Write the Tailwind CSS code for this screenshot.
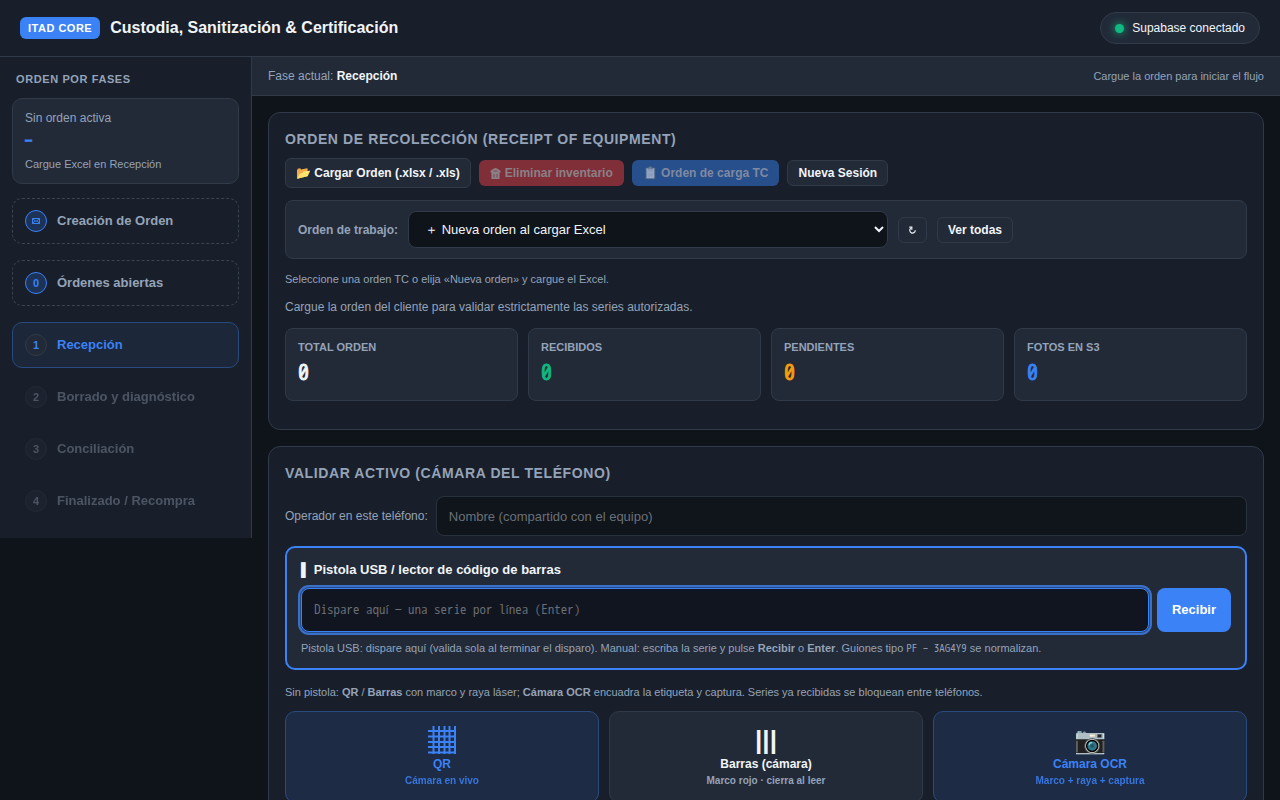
<!DOCTYPE html>
<html lang="es">
<head>
<meta charset="utf-8">
<meta name="viewport" content="width=device-width, initial-scale=1">
<title>ITAD CORE</title>
<script src="https://cdn.jsdelivr.net/npm/@tailwindcss/browser@4"></script>
</head>
<body class="min-h-screen bg-[#0f131a] font-['Liberation_Sans',sans-serif] text-[13px] text-[#f1f5f9]">
<header class="flex items-center justify-between border-b border-[#303a49] bg-[#191f2a] px-5 py-3">
  <div class="flex items-center gap-2.5">
    <span class="rounded-md bg-[#3b82f6] px-2 py-1 text-[11px] leading-[14px] font-bold tracking-[0.5px] text-white">ITAD CORE</span>
    <h1 class="text-base font-bold">Custodia, Sanitización &amp; Certificación</h1>
  </div>
  <div class="flex h-8 items-center gap-2 rounded-full border border-[#303a49] bg-[#222a38] px-3.5 text-xs">
    <span class="size-[9px] rounded-full bg-[#10b981] shadow-[0_0_8px_#10b981]"></span>
    <span>Supabase conectado</span>
  </div>
</header>

<div class="flex items-start">
  <aside class="w-[252px] shrink-0 border-r border-[#303a49] bg-[#191f2a] px-3 py-3.5">
    <h2 class="px-1 text-[11px] leading-4 font-bold tracking-[0.6px] text-[#94a3b8]">ORDEN POR FASES</h2>
    <div class="mt-[11px] mb-3.5 rounded-[10px] border border-[#303a49] bg-[#222a38] px-3 pt-2.5 pb-[11px] text-[#94a3b8]">
      <p class="text-xs leading-[18px]">Sin orden activa</p>
      <p class="mt-1 font-['WenQuanYi_Zen_Hei_Mono','Noto_Sans_Mono_CJK_SC',monospace] text-[14px] leading-5 font-bold text-[#3b82f6] [-webkit-text-stroke:1px]">—</p>
      <p class="mt-[5px] text-[11px] leading-4">Cargue Excel en Recepción</p>
    </div>
    <nav class="flex flex-col gap-1.5 text-[13px] font-bold">
      <button class="mb-2.5 flex h-[46px] items-center gap-2.5 rounded-[10px] border border-dashed border-[#3a4453] px-3 text-[#94a3b8]">
        <span class="flex size-[22px] items-center justify-center rounded-full border border-[#3b82f6] bg-[#1d3257] text-[#3b82f6]">
          <svg class="h-1.5 w-2" viewBox="0 0 8 6" fill="none" stroke="currentColor" aria-hidden="true"><path d="M.5.5h7v5h-7zM.5.5 4 3.500 7.500.5M.5 5.500 3 2.700M7.500 5.500 5 2.700"/></svg>
        </span>Creación de Orden
      </button>
      <button class="mb-2.5 flex h-[46px] items-center gap-2.5 rounded-[10px] border border-dashed border-[#3a4453] px-3 text-[#94a3b8]">
        <span class="flex size-[22px] items-center justify-center rounded-full border border-[#3b82f6] bg-[#1d3257] text-[11px] text-[#3b82f6]">0</span>Órdenes abiertas
      </button>
      <button class="flex h-[46px] items-center gap-2.5 rounded-[10px] border border-[#284a80] bg-[#1c273a] px-3 text-[#3b82f6]">
        <span class="flex size-[22px] items-center justify-center rounded-full border border-[#303a49] bg-[#222a38] text-[11px]">1</span>Recepción
      </button>
      <button class="flex h-[46px] items-center gap-2.5 rounded-[10px] border border-transparent px-3 text-[#94a3b8] opacity-40" disabled>
        <span class="flex size-[22px] items-center justify-center rounded-full border border-[#303a49] bg-[#222a38] text-[11px]">2</span>Borrado y diagnóstico
      </button>
      <button class="flex h-[46px] items-center gap-2.5 rounded-[10px] border border-transparent px-3 text-[#94a3b8] opacity-40" disabled>
        <span class="flex size-[22px] items-center justify-center rounded-full border border-[#303a49] bg-[#222a38] text-[11px]">3</span>Conciliación
      </button>
      <button class="flex h-[46px] items-center gap-2.5 rounded-[10px] border border-transparent px-3 text-[#94a3b8] opacity-40" disabled>
        <span class="flex size-[22px] items-center justify-center rounded-full border border-[#303a49] bg-[#222a38] text-[11px]">4</span>Finalizado / Recompra
      </button>
    </nav>
  </aside>

  <main class="min-w-0 flex-1">
    <div class="flex items-center justify-between border-b border-[#303a49] bg-[#222a38] px-4 py-2.5 text-xs leading-[18px] text-[#94a3b8]">
      <p>Fase actual: <strong class="text-[#f1f5f9]">Recepción</strong></p>
      <p class="text-[11px]">Cargue la orden para iniciar el flujo</p>
    </div>

    <div class="flex flex-col gap-4 p-4">
      <section class="rounded-xl border border-[#303a49] bg-[#191f2a] px-4 pt-4 pb-7">
        <h2 class="text-sm font-bold tracking-[0.6px] text-[#94a3b8]">ORDEN DE RECOLECCIÓN (RECEIPT OF EQUIPMENT)</h2>
        <div class="mt-[9px] flex flex-wrap items-center gap-2 text-xs font-bold">
          <button class="h-[30px] rounded-md border border-[#303a49] bg-[#222a38] px-2.5">📂 Cargar Orden (.xlsx / .xls)</button>
          <button class="flex h-[26px] items-center gap-1 rounded-md bg-[#802f38] px-[11px] text-[#8a8087]" disabled>
            <svg class="h-[11px] w-[11px]" viewBox="0 0 11 11" fill="currentColor" aria-hidden="true"><path d="M5.500 0 8 1l2.500 2v1.500h-10V3L3 1zM1.500 4.500h8V11h-8z"/><path d="M3.500 3h4M4 6v3.500M7 6v3.500" stroke="#802f38" stroke-width=".7"/></svg>Eliminar inventario
          </button>
          <button class="h-[26px] rounded-md bg-[#264f8c] px-[11px] text-[#8089a0]" disabled><span class="opacity-50 grayscale">📋</span> Orden de carga TC</button>
          <button class="h-[26px] rounded-md border border-[#303a49] bg-[#222a38] px-2.5">Nueva Sesión</button>
        </div>
        <div class="mt-3 flex flex-wrap items-center gap-2.5 rounded-lg border border-[#303a49] bg-[#222a38] px-3 py-2.5 text-xs font-bold">
          <label for="orden" class="text-[#94a3b8]">Orden de trabajo:</label>
          <select id="orden" class="h-[37px] w-[480px] rounded-lg border border-[#303a49] bg-[#0f131a] px-3 text-[13px] font-normal text-[#f1f5f9]">
            <option>＋ Nueva orden al cargar Excel</option>
          </select>
          <button class="h-[26px] rounded-md border border-[#303a49] px-2.5" aria-label="Actualizar">
            <svg class="h-2 w-[7px]" viewBox="0 0 7 8" fill="none" stroke="currentColor" stroke-width="1.200" aria-hidden="true"><path d="M1.800 2.300A2.700 2.700 0 1 0 6.200 4.200"/><path d="M.3 1.200h2.500v2.500"/></svg>
          </button>
          <button class="h-[26px] rounded-md border border-[#303a49] px-2.5">Ver todas</button>
        </div>
        <p class="mt-3 text-[11px] leading-4 text-[#94a3b8]">Seleccione una orden TC o elija «Nueva orden» y cargue el Excel.</p>
        <p class="mt-2.5 text-xs leading-5 text-[#94a3b8]">Cargue la orden del cliente para validar estrictamente las series autorizadas.</p>
        <div class="mt-[11px] grid grid-cols-4 gap-2.5 text-[11px] leading-4 font-bold text-[#94a3b8]">
          <div class="rounded-lg border border-[#303a49] bg-[#222a38] px-3 pt-2.5 pb-2.5">
            <p>TOTAL ORDEN</p>
            <p class="mt-0.5 font-['WenQuanYi_Zen_Hei_Mono','Noto_Sans_Mono_CJK_SC',monospace] text-[22px] leading-[33px] text-[#f1f5f9] [-webkit-text-stroke:1px]">0</p>
          </div>
          <div class="rounded-lg border border-[#303a49] bg-[#222a38] px-3 pt-2.5 pb-2.5">
            <p>RECIBIDOS</p>
            <p class="mt-0.5 font-['WenQuanYi_Zen_Hei_Mono','Noto_Sans_Mono_CJK_SC',monospace] text-[22px] leading-[33px] text-[#10b981] [-webkit-text-stroke:1px]">0</p>
          </div>
          <div class="rounded-lg border border-[#303a49] bg-[#222a38] px-3 pt-2.5 pb-2.5">
            <p>PENDIENTES</p>
            <p class="mt-0.5 font-['WenQuanYi_Zen_Hei_Mono','Noto_Sans_Mono_CJK_SC',monospace] text-[22px] leading-[33px] text-[#f59e0b] [-webkit-text-stroke:1px]">0</p>
          </div>
          <div class="rounded-lg border border-[#303a49] bg-[#222a38] px-3 pt-2.5 pb-2.5">
            <p>FOTOS EN S3</p>
            <p class="mt-0.5 font-['WenQuanYi_Zen_Hei_Mono','Noto_Sans_Mono_CJK_SC',monospace] text-[22px] leading-[33px] text-[#3b82f6] [-webkit-text-stroke:1px]">0</p>
          </div>
        </div>
      </section>

      <section class="rounded-xl border border-[#303a49] bg-[#191f2a] p-4">
        <h2 class="text-sm font-bold tracking-[0.6px] text-[#94a3b8]">VALIDAR ACTIVO (CÁMARA DEL TELÉFONO)</h2>
        <div class="mt-[13px] flex items-center gap-2">
          <label for="operador" class="text-xs text-[#94a3b8]">Operador en este teléfono:</label>
          <input id="operador" type="text" placeholder="Nombre (compartido con el equipo)" class="h-10 min-w-0 flex-1 rounded-lg border border-[#29313d] bg-[#0f151b] px-3 text-[13px] placeholder:text-[#6b7078]">
        </div>
        <div class="mt-2.5 rounded-[10px] border-2 border-[#3b82f6] bg-[#222a38] px-3.5 py-3">
          <label for="serie" class="block text-[13px] leading-5 font-bold">▌ Pistola USB / lector de código de barras</label>
          <div class="mt-2 flex gap-2">
            <input id="serie" type="text" placeholder="Dispare aquí — una serie por línea (Enter)" class="h-11 min-w-0 flex-1 rounded-lg border border-[#3b82f6] bg-[#11151f] px-3 font-['WenQuanYi_Zen_Hei_Mono','Noto_Sans_Mono_CJK_SC',monospace] text-[13px] shadow-[0_0_0_1px_#254a88,0_0_0_3px_#3a70c8] outline-none placeholder:text-[#6b7078]">
            <button class="h-11 rounded-lg bg-[#3b82f6] px-[15px] text-[13px] font-bold text-white">Recibir</button>
          </div>
          <p class="mt-2 text-[11px] leading-4 text-[#94a3b8]">Pistola USB: dispare aquí (valida sola al terminar el disparo). Manual: escriba la serie y pulse <strong>Recibir</strong> o <strong>Enter</strong>. Guiones tipo <code class="font-['WenQuanYi_Zen_Hei_Mono','Noto_Sans_Mono_CJK_SC',monospace] text-[11px] leading-none">PF – 3AG4Y9</code> se normalizan.</p>
        </div>
        <p class="mt-3.5 text-[11px] leading-4 text-[#94a3b8]">Sin pistola: <strong>QR</strong> / <strong>Barras</strong> con marco y raya láser; <strong>Cámara OCR</strong> encuadra la etiqueta y captura. Series ya recibidas se bloquean entre teléfonos.</p>
        <div class="mt-[11px] grid grid-cols-3 gap-2.5 text-xs font-bold">
          <button class="flex h-[92px] flex-col items-center rounded-[10px] border border-[#2b4b80] bg-[#1d2b45] pt-3.5 text-[#3b82f6]">
            <svg class="mb-0.5 size-7" viewBox="0 0 28 28" fill="none" stroke="currentColor" stroke-width="2" aria-hidden="true"><path d="M5.500 0v28M11 0v28M16.500 0v28M21.500 0v28M27 0v28M0 5h28M0 10.500h28M0 16h28M0 21h28M0 26.500h28"/></svg>
            <span class="leading-4">QR</span>
            <span class="mt-0.5 text-[10px] leading-3.5 opacity-85">Cámara en vivo</span>
          </button>
          <button class="flex h-[92px] flex-col items-center rounded-[10px] border border-[#303a49] bg-[#222a38] pt-3.5">
            <span class="mb-0.5 text-[26px] leading-7">|||</span>
            <span class="leading-4">Barras (cámara)</span>
            <span class="mt-0.5 text-[10px] leading-3.5 text-[#94a3b8]">Marco rojo · cierra al leer</span>
          </button>
          <button class="flex h-[92px] flex-col items-center rounded-[10px] border border-[#2b4b80] bg-[#1d2b45] pt-3.5 text-[#3b82f6]">
            <span class="mb-0.5 text-[26px] leading-7">📷</span>
            <span class="leading-4">Cámara OCR</span>
            <span class="mt-0.5 text-[10px] leading-3.5 opacity-85">Marco + raya + captura</span>
          </button>
        </div>
      </section>
    </div>
  </main>
</div>
</body>
</html>
